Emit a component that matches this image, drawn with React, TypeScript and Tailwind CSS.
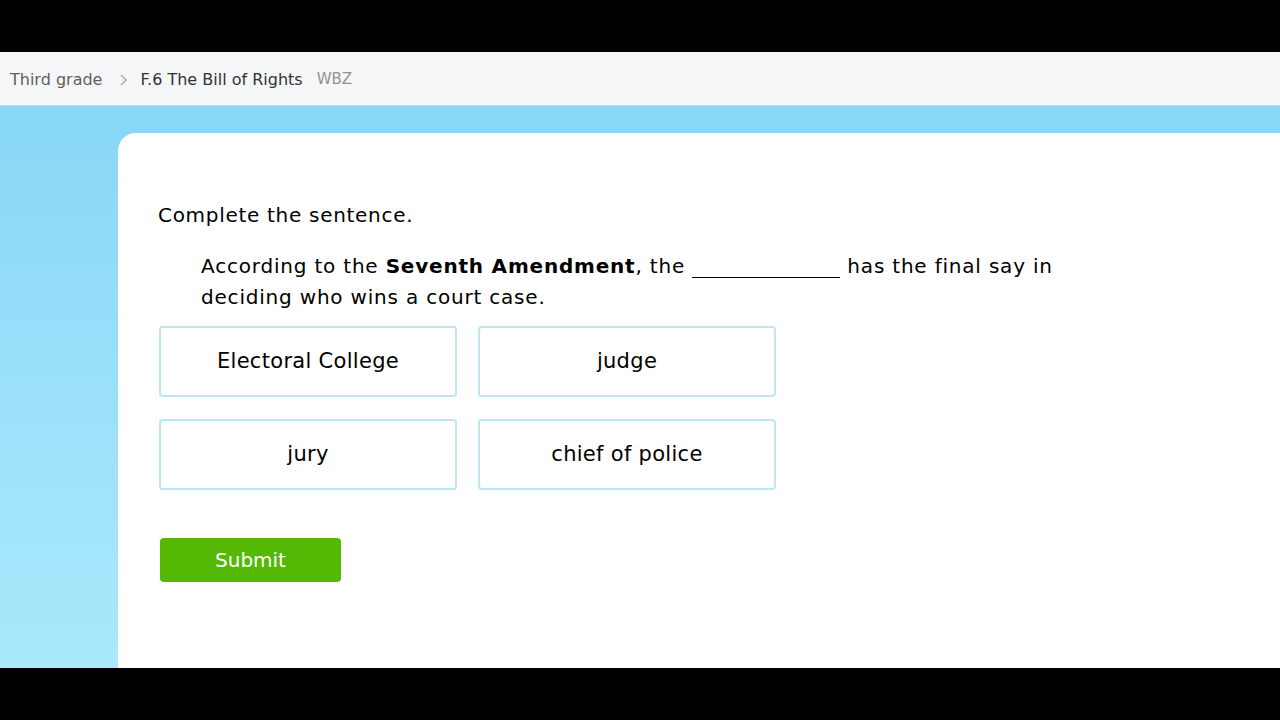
import React from 'react';

const CHOICES = ['Electoral College', 'judge', 'jury', 'chief of police'];

export default function App() {
  return (
    <div className="w-[1280px] h-[720px] bg-black flex flex-col overflow-hidden" style={{ fontFamily: '"DejaVu Sans", Verdana, sans-serif' }}>
      <div className="h-[52px] shrink-0" />

      {/* Breadcrumb */}
      <div className="h-[53px] shrink-0 bg-[#f5f6f7] flex items-center pl-[10px] pt-[2px] text-[16px]">
        <span className="text-[#5f5f5f]">Third grade</span>
        <svg className="ml-[16px] mr-[12px] mt-[1px]" width="10" height="14" viewBox="0 0 10 14" fill="none">
          <path d="M3 2l5 5-5 5" stroke="#a9a9a9" strokeWidth="1.3" />
        </svg>
        <span className="text-[#333]">F.6 The Bill of Rights</span>
        <span className="ml-[14px] text-[#929292] text-[15px]">WBZ</span>
      </div>

      {/* Content area */}
      <div className="h-[563px] shrink-0 bg-gradient-to-b from-[#88d7f7] to-[#aae9fb] pt-[27px] pl-[118px] border-t border-[#a9e3f8]">
        <div className="h-full bg-white rounded-tl-[18px] pl-[40px] pt-[70px]">
          <p className="text-[20px] tracking-[0.7px] text-black leading-[24px]">Complete the sentence.</p>

          <p className="mt-[24px] ml-[43px] w-[880px] text-[20px] tracking-[0.8px] leading-[30px] text-black">
            According to the <b>Seventh Amendment</b>, the{' '}
            <span className="inline-block w-[148px] border-b border-black align-baseline translate-y-[-4px]">&nbsp;</span>{' '}
            has the final say in deciding who wins a court case.
          </p>

          <div className="mt-[14px] grid grid-cols-[298px_298px] gap-x-[21px] gap-y-[22px] ml-[1px]">
            {CHOICES.map((c) => (
              <div
                key={c}
                className="h-[71px] border-2 border-[#bde6f3] rounded-[4px] flex items-center justify-center text-[21px] tracking-[0.3px] text-black"
              >
                {c}
              </div>
            ))}
          </div>

          <button className="mt-[48px] ml-[2px] w-[181px] h-[44px] rounded-[4px] bg-[#55b804] text-white text-[20px] flex items-center justify-center">
            Submit
          </button>
        </div>
      </div>

      <div className="flex-1" />
    </div>
  );
}
